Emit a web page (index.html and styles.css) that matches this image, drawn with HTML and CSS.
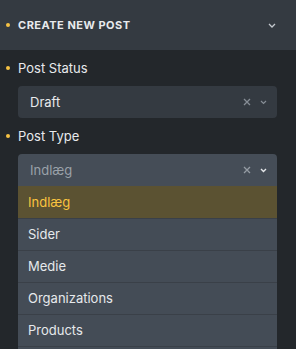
FILE: index.html
```html
<!DOCTYPE html>
<html lang="da">
<head>
    <meta charset="UTF-8">
    <meta name="viewport" content="width=device-width, initial-scale=1.0">
    <title>Create New Post</title>
    <link rel="stylesheet" href="styles.css">
</head>
<body>
    <div class="panel-header">
        <span class="dot"></span>
        <span class="panel-title">Create New Post</span>
        <svg class="chev" width="8" height="5" viewBox="0 0 8 5"><path d="M1 1l3 3 3-3" fill="none" stroke="#c3c8ce" stroke-width="1.3"/></svg>
    </div>

    <div class="panel-body">
        <div class="field-label"><span class="dot"></span>Post Status</div>
        <div class="select">
            <span class="select-value">Draft</span>
            <span class="select-icons">
                <svg width="8" height="8" viewBox="0 0 8 8"><path d="M1 1l6 6M7 1L1 7" stroke="#868d95" stroke-width="1.3"/></svg>
                <svg width="7" height="5" viewBox="0 0 7 5"><path d="M1 1l2.5 2.5L6 1" fill="none" stroke="#868d95" stroke-width="1.2"/></svg>
            </span>
        </div>

        <div class="field-label"><span class="dot"></span>Post Type</div>
        <div class="select select-open">
            <span class="select-value placeholder">Indlæg</span>
            <span class="select-icons">
                <svg width="8" height="8" viewBox="0 0 8 8"><path d="M1 1l6 6M7 1L1 7" stroke="#959ca4" stroke-width="1.3"/></svg>
                <svg width="7" height="5" viewBox="0 0 7 5"><path d="M1 1l2.5 2.5L6 1" fill="none" stroke="#e4e7ea" stroke-width="1.4"/></svg>
            </span>
        </div>
        <ul class="options">
            <li class="active">Indlæg</li>
            <li>Sider</li>
            <li>Medie</li>
            <li>Organizations</li>
            <li>Products</li>
            <li class="more"></li>
        </ul>
    </div>
</body>
</html>
```

FILE: styles.css
```css
body {
    margin: 0;
    background-color: #23272b;
    font-family: Inter, "Noto Sans", sans-serif;
    color: #e8eaed;
}
.dot {
    display: inline-block;
    width: 4px;
    height: 4px;
    border-radius: 50%;
    background-color: #f6c244;
    flex-shrink: 0;
}
.panel-header {
    height: 50px;
    background-color: #343a41;
    display: flex;
    align-items: center;
    padding: 0 20px 0 6px;
}
.panel-title {
    margin-left: 8px;
    font-size: 11px;
    font-weight: 700;
    text-transform: uppercase;
    letter-spacing: 0.5px;
    color: #e8eaed;
    flex: 1;
}
.panel-body {
    padding: 8px 19px 0 6px;
}
.field-label {
    display: flex;
    align-items: center;
    height: 20px;
    font-size: 13px;
    margin-bottom: 8px;
}
.field-label .dot {
    margin-right: 8px;
}
.select {
    margin-left: 12px;
    height: 32px;
    background-color: #343a41;
    border-radius: 4px;
    display: flex;
    align-items: center;
    padding: 0 10px 0 12px;
    margin-bottom: 8px;
    font-size: 13px;
}
.select-value {
    flex: 1;
}
.placeholder {
    color: #9aa1a9;
}
.select-icons {
    display: flex;
    align-items: center;
    gap: 9px;
}
.select-open {
    background-color: #454d57;
    border-radius: 4px 4px 0 0;
    margin-bottom: 0;
}
.options {
    list-style: none;
    margin: 0 0 0 12px;
    padding: 0;
    background-color: #444c56;
}
.options li {
    height: 31px;
    line-height: 31px;
    border-top: 1px solid #3a4048;
    padding-left: 10px;
    font-size: 13px;
    color: #e6e9ec;
}
.options li.active {
    background-color: #5b5232;
    color: #f9c33f;
    border-top-color: #5b5232;
}
.options li.more {
    height: 2px;
}
```
